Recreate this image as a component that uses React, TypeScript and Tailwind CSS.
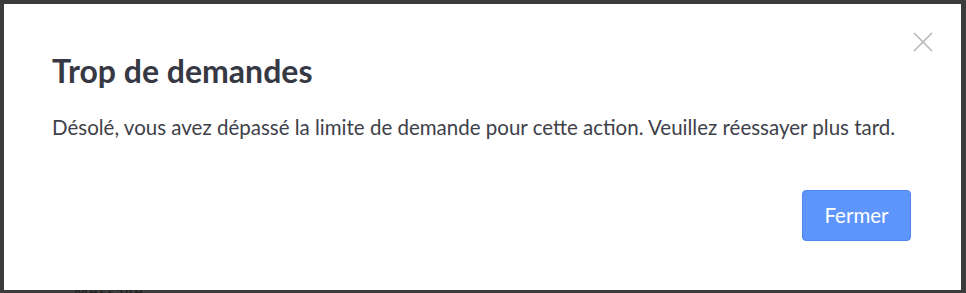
const App = () => {
  return (
    <div className="relative h-[293px] w-[966px] overflow-hidden bg-[#3b3b3b] p-[4px] pr-[5px] font-['Lato','Noto_Sans',sans-serif]">
      {/* faint page behind the backdrop */}
      <div className="absolute bottom-[-9px] left-[74px] text-[15px] tracking-[0.12em] text-[#1f1f1f]">
        Message
      </div>
      <div className="relative h-[286px] w-full bg-white">
        <button
          type="button"
          aria-label="Fermer"
          className="absolute right-[28px] top-[28px] text-[#b8b8b8]"
        >
          <svg width="20" height="20" viewBox="0 0 20 20" fill="none" stroke="currentColor" strokeWidth="1.6">
            <path d="M1 1l18 18M19 1L1 19" />
          </svg>
        </button>
        <div className="flex h-full flex-col px-[48px] pt-[47px]">
          <h2 className="text-[32px] font-bold leading-[40px] text-[#363943]">
            Trop de demandes
          </h2>
          <p className="mt-[22px] text-[20.5px] leading-[28px] text-[#3e4149]">
            Désolé, vous avez dépassé la limite de demande pour cette action. Veuillez réessayer plus tard.
          </p>
          <div className="mt-[49px] flex justify-end pr-[2px]">
            <button
              type="button"
              className="h-[51px] w-[109px] rounded-[4px] border border-[#4f86f0] bg-[#5e95fc] text-[20.5px] text-white"
            >
              Fermer
            </button>
          </div>
        </div>
      </div>
    </div>
  );
};

export default App;
